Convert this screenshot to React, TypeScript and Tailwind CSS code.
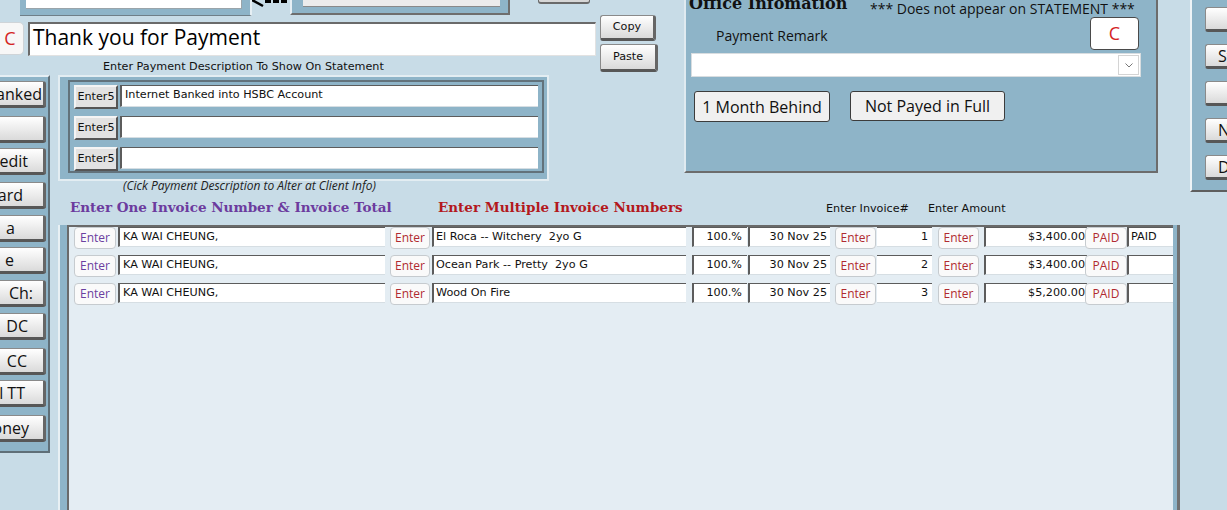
import React from "react";

const tah = "font-['DejaVu_Sans',sans-serif] text-[11.2px] leading-[14px] text-[#111]";
const seg = "font-['Open_Sans',sans-serif]";
const bevel =
  "bg-linear-to-b from-white to-[#dadada] border border-[#8a8a8a] border-b-[3px] border-r-[3px] border-b-[#575757] border-r-[#666666] rounded-[3px]";
const field =
  "bg-white border-t border-t-[#5c5c5c] border-l-2 border-l-[#5c5c5c] border-b border-b-[#d6dee3]";
const softBtn =
  "bg-[#fafafa] border border-[#c6cbcf] rounded-[4px] flex items-center justify-center text-[12px] leading-[16px] font-['Open_Sans',sans-serif] shrink-0";
const blue = "bg-[#8eb4c8]";

type Row = { name: string; desc: string; inv: string; amt: string; last: string };
const rows: Row[] = [
  { name: "KA WAI CHEUNG,", desc: "El Roca -- Witchery  2yo G", inv: "1", amt: "$3,400.00", last: "PAID" },
  { name: "KA WAI CHEUNG,", desc: "Ocean Park -- Pretty  2yo G", inv: "2", amt: "$3,400.00", last: "" },
  { name: "KA WAI CHEUNG,", desc: "Wood On Fire", inv: "3", amt: "$5,200.00", last: "" },
];

const leftBtns: { t: string; cls: string }[] = [
  { t: "anked", cls: "mt-[4px] pr-[1px]" },
  { t: "", cls: "mt-[8px] pr-[1px]" },
  { t: "edit", cls: "mt-[5px] pr-[15px]" },
  { t: "ard", cls: "mt-[7px] pr-[20px]" },
  { t: "a", cls: "mt-[6px] pr-[28px]" },
  { t: "e", cls: "mt-[5px] pr-[29px]" },
  { t: "Ch:", cls: "mt-[6px] pr-[10px]" },
  { t: "DC", cls: "mt-[6px] pr-[15px]" },
  { t: "CC", cls: "mt-[8px] pr-[16px]" },
  { t: "l TT", cls: "mt-[5px] pr-[18px]" },
  { t: "oney", cls: "mt-[8px] pr-[14px]" },
];

const rightBtns = ["", "Statement", "", "New", "Delete"];

export default function App() {
  return (
    <div className="w-[1227px] h-[510px] overflow-hidden bg-[#c8dce7] grid grid-cols-[58px_626px_474px_22px_10px_37px] grid-rows-[75px_120px_30px_285px] text-black">
      {/* Top area */}
      <div className="col-start-1 col-end-3 row-start-1 flex flex-col">
        <div className="h-[15px] flex items-start">
          <div className={`ml-[20px] w-[232px] h-[16px] ${blue} border-r-2 border-r-[#e6eff4] border-b border-b-[#6f7f88] pl-[6px]`}>
            <div className="w-[216px] h-[9px] bg-white border-b border-r border-[#9aa4aa]" />
          </div>
          <svg width="38" height="8" viewBox="0 0 38 8" className="shrink-0">
            <path d="M0 0 L11 6" stroke="#000" strokeWidth="2.5" />
            <rect x="13" y="0" width="6" height="3" fill="#000" />
            <rect x="21" y="0" width="6" height="3" fill="#000" />
            <rect x="29" y="0" width="6" height="3" fill="#000" />
          </svg>
          <div className={`w-[220px] h-[15px] ${blue} border-l-2 border-l-[#e6eff4] border-r-2 border-b-2 border-r-[#6e6e6e] border-b-[#6e6e6e] pl-[11px]`}>
            <div className="w-[197px] h-[7px] bg-[#ececec] border-b border-[#8a8a8a]" />
          </div>
          <div className="ml-[28px] w-[52px] h-[4px] bg-[#d6d6d6] border-b-2 border-x border-[#6a6a6a] rounded-b-[3px]" />
        </div>
        <div className="flex items-start">
          <div className={`mt-[7px] w-[24px] h-[33px] bg-[#f7f7f7] border border-l-0 border-[#cfd4d8] rounded-r-[5px] flex items-center justify-center pr-[3px] text-[18px] text-[#d42424] ${seg}`}>
            C
          </div>
          <div className="ml-[4px] flex flex-col">
            <div className={`mt-[7px] w-[568px] h-[34px] bg-white border-t-2 border-l-2 border-[#6a6a6a] border-b border-r border-b-[#e2e2e2] border-r-[#e2e2e2] pl-[3px] text-[21px] leading-[26px] whitespace-nowrap ${seg}`}>
              Thank you for Payment
            </div>
            <div className={`mt-[4px] pl-[75px] whitespace-nowrap ${tah}`}>
              Enter Payment Description To Show On Statement
            </div>
          </div>
          <div className="ml-[4px] flex flex-col">
            <div className={`w-[56px] h-[26px] ${bevel} flex items-center justify-center ${tah}`}>Copy</div>
            <div className={`mt-[3px] w-[58px] h-[28px] ${bevel} flex items-center justify-center ${tah}`}>Paste</div>
          </div>
        </div>
      </div>

      {/* Office Information panel */}
      <div className={`col-start-3 col-end-4 row-start-1 row-end-3 self-start h-[173px] ${blue} border-l-2 border-l-[#dfeaf0] border-r-2 border-r-[#6c6c6c] border-b-2 border-b-[#6c6c6c] flex flex-col`}>
        <div className="h-[17px] flex items-start whitespace-nowrap">
          <span className="w-[184px] pl-[3px] mt-[-4px] font-['DejaVu_Serif',serif] font-bold text-[16px] leading-[16px] text-[#111]">
            Office Infomation
          </span>
          <span className={`mt-[1px] text-[14px] leading-[16px] text-[#111] ${seg}`}>
            *** Does not appear on STATEMENT ***
          </span>
        </div>
        <div className="flex items-start">
          <span className={`pl-[30px] mt-[9px] text-[14px] leading-[20px] text-[#111] ${seg}`}>Payment Remark</span>
          <div className={`ml-auto mr-[17px] w-[49px] h-[33px] bg-white border border-[#4a4a4a] rounded-[4px] flex items-center justify-center text-[18px] text-[#d42424] ${seg}`}>
            C
          </div>
        </div>
        <div className="mt-[3px] ml-[5px] w-[450px] h-[24px] bg-white border border-[#d8dde0] flex justify-end items-center">
          <div className="w-[21px] h-[20px] mr-[1px] border border-[#d4d4d4] flex items-center justify-center">
            <svg width="8" height="5" viewBox="0 0 8 5">
              <path d="M0.5 0.5 L4 4 L7.5 0.5" stroke="#777" strokeWidth="1" fill="none" />
            </svg>
          </div>
        </div>
        <div className="mt-[14px] flex items-start">
          <div className={`ml-[8px] w-[136px] h-[31px] bg-[#f0f0f0] border border-[#3c3c3c] rounded-[3px] flex items-center justify-center text-[16px] text-[#111] whitespace-nowrap ${seg}`}>
            1 Month Behind
          </div>
          <div className={`ml-[20px] w-[155px] h-[30px] bg-[#f0f0f0] border border-[#3c3c3c] rounded-[3px] flex items-center justify-center text-[16px] text-[#111] whitespace-nowrap ${seg}`}>
            Not Payed in Full
          </div>
        </div>
      </div>

      {/* Right panel */}
      <div className={`col-start-6 col-end-7 row-start-1 row-end-3 self-start h-[192px] ${blue} border-l-2 border-l-[#eef4f7] border-b-2 border-b-[#5e5e5e] pl-[13px] pt-[7px] flex flex-col gap-[12px]`}>
        {rightBtns.map((t, i) => (
          <div key={i} className={`w-[40px] h-[25px] shrink-0 ${bevel} flex items-center pl-[12px] overflow-hidden whitespace-nowrap text-[16px] text-[#111] ${seg}`}>
            {t}
          </div>
        ))}
      </div>

      {/* Left button column */}
      <div className={`col-start-1 col-end-2 row-start-2 row-end-5 self-start h-[378px] w-[50px] ${blue} border-t-2 border-t-[#e6eff4] border-r-2 border-r-[#5f6f78] border-b-2 border-b-[#5f6f78] flex flex-col`}>
        {leftBtns.map((b, i) => (
          <div
            key={i}
            className={`${b.cls} w-[46px] h-[27px] shrink-0 bg-linear-to-b from-white to-[#dadada] border border-l-0 border-[#8a8a8a] border-b-[3px] border-r-[3px] border-b-[#575757] border-r-[#666666] rounded-r-[3px] flex items-center justify-end overflow-hidden whitespace-nowrap text-[16px] text-[#111] ${seg}`}
          >
            {b.t}
          </div>
        ))}
      </div>

      {/* Payment description panel */}
      <div className="col-start-2 col-end-3 row-start-2 flex flex-col items-start">
        <div className={`w-[491px] h-[106px] ${blue} border-2 border-[#e3edf2] pt-[3px] pl-[8px] pr-[3px] pb-[6px] flex`}>
          <div className="flex-1 border-2 border-[#62727b] pl-[4px] pt-[3px] flex flex-col gap-[7px]">
            {["Internet Banked into HSBC Account", "", ""].map((t, i) => (
              <div key={i} className="flex items-start">
                <div className={`w-[44px] h-[24px] bg-[#e2e2e2] border-2 border-t-[#f4f4f4] border-l-[#f4f4f4] border-b-[#555] border-r-[#555] flex items-center justify-center ${tah}`}>
                  Enter5
                </div>
                <div className={`ml-[2px] w-[418px] h-[22px] ${field} pl-[3px] pt-[2px] whitespace-pre ${tah}`}>{t}</div>
              </div>
            ))}
          </div>
        </div>
        <div className={`mt-[-2px] pl-[65px] italic text-[12px] leading-[14px] text-[#222] whitespace-nowrap ${seg}`}>
          (Cick Payment Description to Alter at Client Info)
        </div>
      </div>

      {/* Headings */}
      <div className="col-start-2 col-end-5 row-start-3 flex items-baseline pt-[4px] whitespace-nowrap">
        <span className="w-[380px] pl-[12px] font-['DejaVu_Serif',serif] font-bold text-[13.5px] leading-[16px] text-[#6c3b9e]">
          Enter One Invoice Number &amp; Invoice Total
        </span>
        <span className="w-[388px] font-['DejaVu_Serif',serif] font-bold text-[13.5px] leading-[16px] text-[#b3181d]">
          Enter Multiple Invoice Numbers
        </span>
        <span className={`w-[102px] ${tah}`}>Enter Invoice#</span>
        <span className={tah}>Enter Amount</span>
      </div>

      {/* Invoice table */}
      <div className={`col-start-2 col-end-5 row-start-4 flex ${blue} border-l-2 border-l-[#e8f0f4] pl-[7px] pr-[4px] border-r-[3px] border-r-[#707070]`}>
        <div className="flex-1 flex flex-col border-t-2 border-l-2 border-[#6a6a6a] bg-[#e4edf3] pl-[5px]">
          {rows.map((r, i) => (
            <div key={i} className="h-[28px] flex items-start shrink-0 whitespace-pre">
              <div className={`${softBtn} w-[42px] h-[22px] text-[#6b3fa0]`}>Enter</div>
              <div className={`ml-[2px] w-[267px] h-[20px] ${field} pl-[3px] pt-[2px] ${tah}`}>{r.name}</div>
              <div className={`${softBtn} ml-[5px] w-[40px] h-[22px] text-[#b02a30]`}>Enter</div>
              <div className={`ml-[2px] w-[254px] h-[20px] ${field} pl-[2px] pt-[2px] ${tah}`}>{r.desc}</div>
              <div className={`ml-[6px] w-[55px] h-[20px] ${field} pr-[5px] pt-[2px] text-right ${tah}`}>100.%</div>
              <div className={`ml-[1px] w-[82px] h-[20px] ${field} pr-[3px] pt-[2px] text-right ${tah}`}>30 Nov 25</div>
              <div className={`${softBtn} ml-[5px] w-[41px] h-[22px] text-[#b02a30]`}>Enter</div>
              <div className={`ml-[1px] w-[55px] h-[20px] bg-white border-t border-t-[#5c5c5c] border-b border-b-[#d6dee3] pr-[4px] pt-[2px] text-right ${tah}`}>{r.inv}</div>
              <div className={`${softBtn} ml-[6px] w-[41px] h-[22px] text-[#b02a30]`}>Enter</div>
              <div className={`ml-[5px] w-[103px] h-[20px] ${field} pr-[2px] pt-[2px] text-right ${tah}`}>{r.amt}</div>
              <div className={`${softBtn} ml-[-2px] w-[42px] h-[22px] text-[#b02a30] relative z-10`}>PAID</div>
              <div className={`w-[46px] h-[20px] ${field} pl-[2px] pt-[2px] ${tah}`}>{r.last}</div>
            </div>
          ))}
        </div>
      </div>
    </div>
  );
}
